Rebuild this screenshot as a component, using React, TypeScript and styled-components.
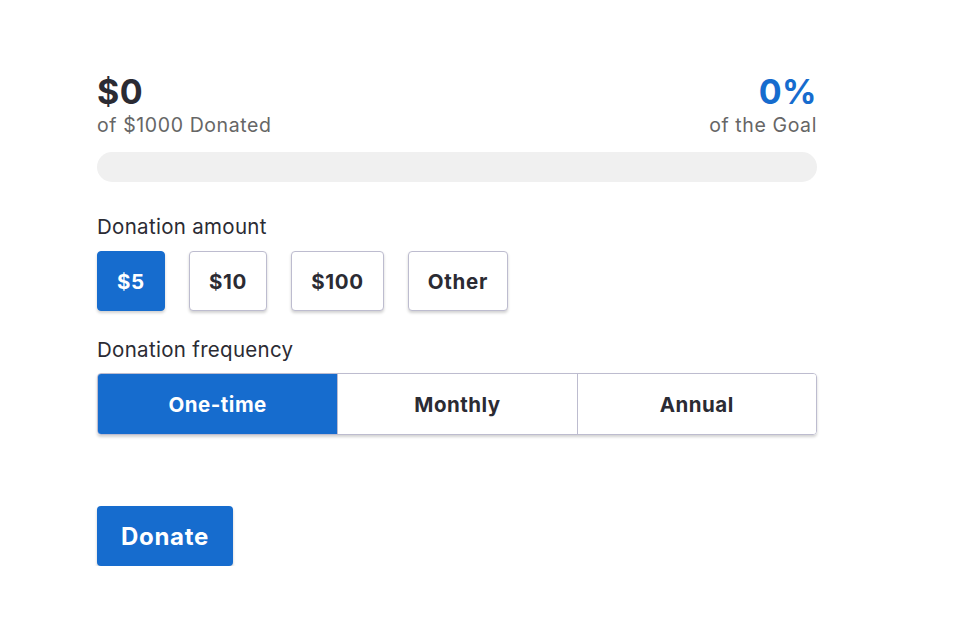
import React, { useState } from "react";
import styled, { createGlobalStyle } from "styled-components";

const blue = "#166cce";

const GlobalStyle = createGlobalStyle`
  body {
    margin: 0;
    background: #fff;
    font-family: Inter, "Noto Sans", sans-serif;
    color: #2b2b33;
  }
`;

const Page = styled.main`
  width: 720px;
  padding: 72px 0 0 97px;
`;

const Stats = styled.div`
  display: flex;
  justify-content: space-between;
  align-items: flex-end;
`;

const Stat = styled.div<{ $right?: boolean }>`
  display: flex;
  flex-direction: column;
  align-items: ${(p) => (p.$right ? "flex-end" : "flex-start")};
`;

const Big = styled.div<{ $accent?: boolean }>`
  font-size: 34px;
  font-weight: 700;
  line-height: 40px;
  letter-spacing: 0.4px;
  color: ${(p) => (p.$accent ? blue : "#2b2b33")};
`;

const Sub = styled.div`
  font-size: 19.5px;
  line-height: 27px;
  letter-spacing: 0.6px;
  color: #666;
`;

const Track = styled.div`
  margin-top: 13px;
  height: 30px;
  border-radius: 15px;
  background: #f0f0f0;
  overflow: hidden;
`;

const Fill = styled.div`
  height: 100%;
  background: ${blue};
`;

const Label = styled.div<{ $gap: number }>`
  margin-top: ${(p) => p.$gap}px;
  font-size: 20.5px;
  line-height: 26px;
  letter-spacing: 0.3px;
  color: #2b2b33;
`;

const Amounts = styled.div`
  display: flex;
  gap: 24px;
  margin-top: 11px;
`;

const Choice = styled.button<{ $active?: boolean }>`
  height: 60px;
  padding: 0 19px;
  border-radius: 4px;
  border: 1px solid ${(p) => (p.$active ? blue : "#bdbccf")};
  background: ${(p) => (p.$active ? blue : "#fff")};
  color: ${(p) => (p.$active ? "#fff" : "#2b2b33")};
  font-family: inherit;
  font-size: 20.5px;
  font-weight: 700;
  letter-spacing: 0.7px;
  box-shadow: 0 2px 3px rgba(0, 0, 0, 0.18);
  cursor: pointer;
`;

const Segments = styled.div`
  display: grid;
  grid-template-columns: repeat(3, 1fr);
  margin-top: 10px;
  height: 60px;
  border: 1px solid #bdbccf;
  border-radius: 4px;
  overflow: hidden;
  box-shadow: 0 2px 3px rgba(0, 0, 0, 0.18);
`;

const Segment = styled.button<{ $active?: boolean }>`
  border: none;
  border-left: 1px solid #bdbccf;
  background: ${(p) => (p.$active ? blue : "#fff")};
  color: ${(p) => (p.$active ? "#fff" : "#2b2b33")};
  font-family: inherit;
  font-size: 20.5px;
  font-weight: 700;
  letter-spacing: 0.5px;
  cursor: pointer;
  &:first-child {
    border-left: none;
  }
`;

const DonateButton = styled.button`
  margin-top: 71px;
  height: 60px;
  padding: 0 24px;
  border: none;
  border-radius: 4px;
  background: ${blue};
  color: #fff;
  font-family: inherit;
  font-size: 24px;
  font-weight: 700;
  letter-spacing: 0.7px;
  box-shadow: 0 2px 3px rgba(0, 0, 0, 0.2);
  cursor: pointer;
`;

const amounts = ["$5", "$10", "$100", "Other"];
const frequencies = ["One-time", "Monthly", "Annual"];

export default function App() {
  const [amount, setAmount] = useState("$5");
  const [freq, setFreq] = useState("One-time");
  const raised = 0;
  const goal = 1000;
  const pct = Math.round((raised / goal) * 100);

  return (
    <>
      <GlobalStyle />
      <Page>
        <Stats>
          <Stat>
            <Big>${raised}</Big>
            <Sub>of ${goal} Donated</Sub>
          </Stat>
          <Stat $right>
            <Big $accent>{pct}%</Big>
            <Sub>of the Goal</Sub>
          </Stat>
        </Stats>
        <Track>
          <Fill style={{ width: `${pct}%` }} />
        </Track>

        <Label $gap={32}>Donation amount</Label>
        <Amounts>
          {amounts.map((a) => (
            <Choice key={a} $active={a === amount} onClick={() => setAmount(a)}>
              {a}
            </Choice>
          ))}
        </Amounts>

        <Label $gap={26}>Donation frequency</Label>
        <Segments>
          {frequencies.map((f) => (
            <Segment key={f} $active={f === freq} onClick={() => setFreq(f)}>
              {f}
            </Segment>
          ))}
        </Segments>

        <DonateButton>Donate</DonateButton>
      </Page>
    </>
  );
}
